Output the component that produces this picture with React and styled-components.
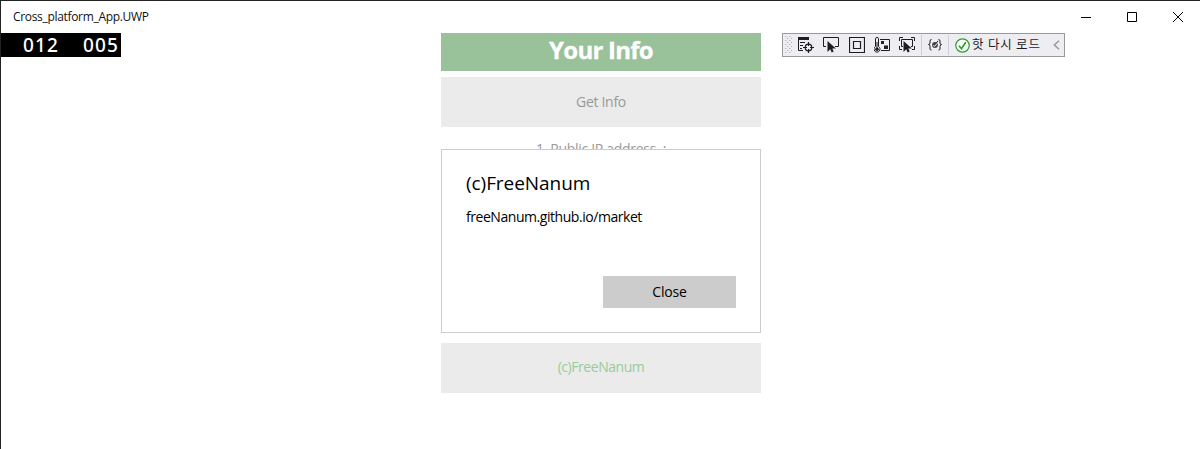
import React from 'react';
import styled, { createGlobalStyle } from 'styled-components';

const Global = createGlobalStyle`
  * { box-sizing: border-box; }
  body {
    margin: 0;
    background: #fff;
    font-family: "Open Sans", "Noto Sans", "Noto Sans CJK KR", sans-serif;
  }
`;

const Window = styled.div`
  width: 1200px;
  height: 449px;
  overflow: hidden;
  border-top: 1px solid #222;
  border-left: 1px solid #222;
  background: #fff;
`;

const TitleBar = styled.header`
  display: flex;
  justify-content: space-between;
  height: 32px;
  padding-left: 12px;
`;

const Title = styled.span`
  font-size: 12px;
  line-height: 31px;
  letter-spacing: -0.32px;
  color: #111;
`;

const Controls = styled.div`
  display: flex;
`;

const Control = styled.div`
  width: 46px;
  height: 32px;
  svg { display: block; }
`;

const Client = styled.main`
  display: grid;
  grid-template-columns: 440px 320px 1fr;
  align-items: start;
`;

const Counter = styled.div`
  display: flex;
  gap: 24px;
  width: 120px;
  height: 24px;
  padding-left: 22px;
  background: #000;
  color: #fff;
  font-family: "Noto Sans", sans-serif;
  font-size: 19px;
  font-weight: 500;
  line-height: 24px;
  letter-spacing: 1.13px;
`;

const Page = styled.section`
  display: flex;
  flex-direction: column;
  position: relative;
  height: 360px;
`;

const Banner = styled.h1`
  margin: 0 0 6px;
  height: 38px;
  background: #99c29b;
  color: #fff;
  font-size: 24px;
  font-weight: 700;
  line-height: 34px;
  letter-spacing: -0.75px;
  text-align: center;
  -webkit-text-stroke: 0.3px #fff;
`;

const PageButton = styled.div`
  height: 50px;
  background: #ebebeb;
  color: ${(p) => p.$color || '#999'};
  font-size: 14px;
  line-height: ${(p) => p.$line || '50px'};
  letter-spacing: ${(p) => p.$track || '0'};
  text-align: center;
`;

const Info = styled.div`
  flex: 1;
  padding-top: 12px;
  color: #999;
  font-size: 14px;
  line-height: 20px;
  letter-spacing: -0.3px;
  text-align: center;
`;

const Dialog = styled.div`
  position: absolute;
  top: 116px;
  left: 0;
  width: 320px;
  height: 184px;
  display: flex;
  flex-direction: column;
  padding: 20px 24px 24px;
  border: 1px solid #ccc;
  background: #fff;
  color: #000;
`;

const DialogTitle = styled.h2`
  margin: 0;
  font-size: 19px;
  font-weight: 400;
  line-height: 26px;
  letter-spacing: -0.06px;
`;

const DialogText = styled.p`
  margin: 11px 0 0;
  flex: 1;
  font-size: 14px;
  line-height: 20px;
  letter-spacing: -0.45px;
`;

const CloseButton = styled.button`
  align-self: flex-end;
  width: 133px;
  height: 32px;
  padding: 0;
  border: 0;
  background: #ccc;
  color: #000;
  font: 14px/32px "Open Sans", "Noto Sans", sans-serif;
  letter-spacing: -0.2px;
`;

const Toolbar = styled.div`
  display: flex;
  align-items: center;
  width: 283px;
  height: 24px;
  margin-left: 21px;
  padding-left: 2px;
  border: 1px solid #999;
  background: #eeeef2;
  svg { display: block; flex: none; }
`;

const Tools = styled.div`
  display: flex;
  gap: 9.25px;
  margin-left: 6px;
`;

const Divider = styled.i`
  flex: none;
  width: 1px;
  height: 20px;
  margin: 0 6px;
  background: #ccced8;
`;

const Reload = styled.span`
  width: 81px;
  margin-left: 2px;
  color: #1e1e1e;
  font-family: "Noto Sans CJK KR", sans-serif;
  font-size: 12.5px;
  line-height: 20px;
  height: 22px;
  letter-spacing: 0.8px;
  white-space: nowrap;
`;

const Icon = ({ w = 16, h = 16, children }) => (
  <svg width={w} height={h} viewBox={`0 0 ${w} ${h}`} fill="none" stroke="#1e1e1e">
    {children}
  </svg>
);

const cursor = 'M4.5 4v11l2.7-2.7 1.5 3.2 2-.9-1.4-3.1h3.6z';

const Grip = () => (
  <Icon w={7} h={18}>
    {Array.from({ length: 9 }, (_, i) => (
      <path key={i} d={`M${i % 2 ? 2 : 0} ${i * 2 + 0.5}h1.3M${i % 2 ? 6 : 4} ${i * 2 + 0.5}h1.3`} stroke="#b4b4ba" />
    ))}
  </Icon>
);

const TreeIcon = () => (
  <Icon>
    <path d="M0 0h11v3H0z" fill="#1e1e1e" stroke="none" />
    <path d="M.5 3v10.5H5M2 5.5h5M2 8.5h3M2 11.5h2" />
    <circle cx="10.5" cy="10.5" r="3.3" strokeWidth="1.2" />
    <path d="M10.5 5v4M10.5 12v4M5 10.5h4M12 10.5h4" strokeWidth="1.2" />
  </Icon>
);

const SelectIcon = () => (
  <Icon>
    <path d="M3 9.5H.5v-9h15v9H12" />
    <path d={cursor} fill="#1e1e1e" stroke="none" />
  </Icon>
);

const AdornerIcon = () => (
  <Icon>
    <path d="M.5.5h15v15H.5zM4.5 4.5h7v7h-7z" strokeWidth="1.2" />
  </Icon>
);

const ThermoIcon = () => (
  <Icon>
    <path d="M1.5 9.5v-8q0-1 1.5-1t1.5 1v8a3 3 0 1 1-3 0z" />
    <circle cx="3" cy="12.3" r="1.8" fill="#1e1e1e" stroke="none" />
    <path d="M3 5v7M6 2.5h9.5v11H7" />
    <path d="M7 4h3v3H7zM10 8.5h4v3.5h-4z" fill="#1e1e1e" stroke="none" />
  </Icon>
);

const FocusIcon = () => (
  <Icon>
    <path d="M.5 4V.5H4M12 .5h3.5V4M.5 9v3.5H3M15.5 9v3.5H13" />
    <path d="M4 9.5H2.5v-7h11v7H12" />
    <path d={cursor} fill="#1e1e1e" stroke="none" />
  </Icon>
);

const BindingIcon = () => (
  <Icon w={14} h={12}>
    <path d="M3.5.5Q2 .5 2 2v2Q2 5.5.5 5.5 2 5.5 2 7.5V10q0 1 1.5 1M10.5.5Q12 .5 12 2v2q0 1.5 1.5 1.5Q12 5.5 12 7.5V10q0 1-1.5 1" />
    <circle cx="7" cy="6" r="2.9" fill="#444" stroke="none" />
    <path d="M5.3 6.2l1.3 1.3 3.6-4.7" stroke="#eeeef2" />
    <path d="M8 4.5l2-2.7" />
  </Icon>
);

const CheckIcon = () => (
  <Icon w={15} h={15}>
    <circle cx="7.5" cy="7.5" r="6.7" stroke="#339933" fill="#f8fbf8" strokeWidth="1.2" />
    <path d="M4 7.7l2.5 3 4.3-6.5" stroke="#339933" strokeWidth="1.7" />
  </Icon>
);

export default function App() {
  return (
    <Window>
      <Global />
      <TitleBar>
        <Title>Cross_platform_App.UWP</Title>
        <Controls>
          <Control>
            <svg width="46" height="32" stroke="#000" fill="none"><path d="M19 16.5h10" /></svg>
          </Control>
          <Control>
            <svg width="46" height="32" stroke="#000" fill="none"><path d="M19.5 11.5h9v9h-9z" /></svg>
          </Control>
          <Control>
            <svg width="46" height="32" stroke="#000" fill="none"><path d="M19 11l10 10M29 11L19 21" /></svg>
          </Control>
        </Controls>
      </TitleBar>
      <Client>
        <Counter>
          <span>012</span>
          <span>005</span>
        </Counter>
        <Page>
          <Banner>Your Info</Banner>
          <PageButton $track="-0.3px">Get Info</PageButton>
          <Info>1. Public IP address &nbsp;:</Info>
          <PageButton $color="#99cc9b" $track="-0.45px" $line="48px">(c)FreeNanum</PageButton>
          <Dialog>
            <DialogTitle>(c)FreeNanum</DialogTitle>
            <DialogText>freeNanum.github.io/market</DialogText>
            <CloseButton>Close</CloseButton>
          </Dialog>
        </Page>
        <Toolbar>
          <Grip />
          <Tools>
            <TreeIcon />
            <SelectIcon />
            <AdornerIcon />
            <ThermoIcon />
            <FocusIcon />
          </Tools>
          <Divider />
          <BindingIcon />
          <Divider />
          <CheckIcon />
          <Reload>핫 다시 로드</Reload>
          <Icon w={7} h={10}>
            <path d="M6 .7L1.3 5 6 9.3" stroke="#999" strokeWidth="1.5" />
          </Icon>
        </Toolbar>
      </Client>
    </Window>
  );
}
